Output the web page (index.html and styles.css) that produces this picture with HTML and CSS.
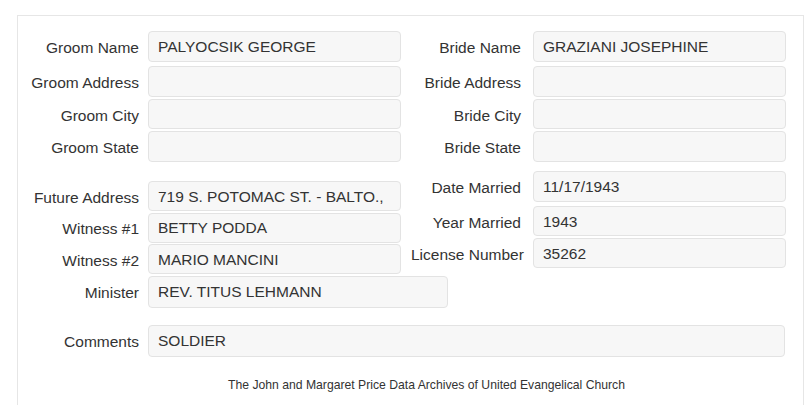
FILE: index.html
```html
<!DOCTYPE html>
<html>
<head>
<meta charset="utf-8">
<link rel="stylesheet" href="styles.css">
</head>
<body>
<div class="panel">
  <div class="grid top">
    <label class="lbl">Groom Name</label><div class="field">PALYOCSIK GEORGE</div>
    <label class="lbl r">Bride Name</label><div class="field">GRAZIANI JOSEPHINE</div>
    <label class="lbl">Groom Address</label><div class="field"></div>
    <label class="lbl r">Bride Address</label><div class="field"></div>
    <label class="lbl">Groom City</label><div class="field h30"></div>
    <label class="lbl r">Bride City</label><div class="field h30"></div>
    <label class="lbl">Groom State</label><div class="field"></div>
    <label class="lbl r">Bride State</label><div class="field"></div>
  </div>
  <div class="split">
    <div class="col left">
      <div class="row"><label class="lbl">Future Address</label><div class="field h30">719 S. POTOMAC ST. - BALTO.,</div></div>
      <div class="row"><label class="lbl">Witness #1</label><div class="field h30">BETTY PODDA</div></div>
      <div class="row"><label class="lbl">Witness #2</label><div class="field h30">MARIO MANCINI</div></div>
      <div class="row"><label class="lbl">Minister</label><div class="field wide">REV. TITUS LEHMANN</div></div>
    </div>
    <div class="col right">
      <div class="row first"><label class="lbl r">Date Married</label><div class="field">11/17/1943</div></div>
      <div class="row"><label class="lbl r">Year Married</label><div class="field h30">1943</div></div>
      <div class="row"><label class="lbl r">License Number</label><div class="field h30">35262</div></div>
    </div>
  </div>
  <div class="row comments"><label class="lbl">Comments</label><div class="field full">SOLDIER</div></div>
  <p class="footer">The John and Margaret Price Data Archives of United Evangelical Church</p>
</div>
</body>
</html>
```
FILE: styles.css
```css
html, body {
  margin: 0;
  padding: 0;
  background: #fff;
}
body {
  font-family: "Liberation Sans", Arial, sans-serif;
  color: #333;
  height: 405px;
  overflow: hidden;
}
.panel {
  margin: 15px 0 0 17px;
  width: 787px;
  height: 390px;
  box-sizing: border-box;
  border: 1px solid #e6e6e6;
  border-bottom: none;
  padding-top: 15px;
  overflow: hidden;
}
.lbl {
  display: flex;
  align-items: center;
  justify-content: flex-start;
  box-sizing: border-box;
  width: 130px;
  flex-shrink: 0;
  font-size: 15.5px;
  line-height: 18px;
  padding: 3px 9px 0 0;
  white-space: nowrap;
  align-self: stretch;
  text-align: right;
}
.lbl::before {
  content: "";
  flex: 1 1 0;
}
.lbl.r {
  width: 132px;
  padding-left: 10px;
  padding-right: 12px;
}
.lbl.r::before {
  flex: 1 0 0;
}
.field {
  box-sizing: border-box;
  flex-shrink: 0;
  width: 253px;
  background: #f7f7f7;
  border: 1px solid #e3e3e3;
  border-radius: 4px;
  font-size: 15.5px;
  color: #333;
  padding: 1px 9px 0;
  display: flex;
  align-items: center;
  height: 31px;
  white-space: nowrap;
}
.field.h30 {
  height: 30px;
}
.grid {
  display: grid;
  grid-template-columns: 130px 253px 132px 253px;
  grid-template-rows: 35px 33px 32px 31px;
  align-items: start;
}
.grid .lbl {
  height: 31px;
}
.split {
  display: flex;
  align-items: flex-start;
}
.col {
  display: flex;
  flex-direction: column;
}
.col .row {
  display: flex;
  align-items: stretch;
}
.left {
  width: 383px;
  flex-shrink: 0;
  margin-top: 19px;
  gap: 1.5px;
}
.left .field.wide {
  width: 300px;
  height: 32px;
}
.right {
  margin-top: 9px;
  gap: 2px;
}
.right .row.first {
  margin-bottom: 2px;
}
.row.comments {
  display: flex;
  align-items: stretch;
  margin-top: 17px;
}
.comments .field {
  width: 637px;
  height: 32px;
}
.footer {
  margin: 21px 0 0 0;
  padding-left: 32px;
  text-align: center;
  font-size: 12.2px;
  color: #333;
}
```
